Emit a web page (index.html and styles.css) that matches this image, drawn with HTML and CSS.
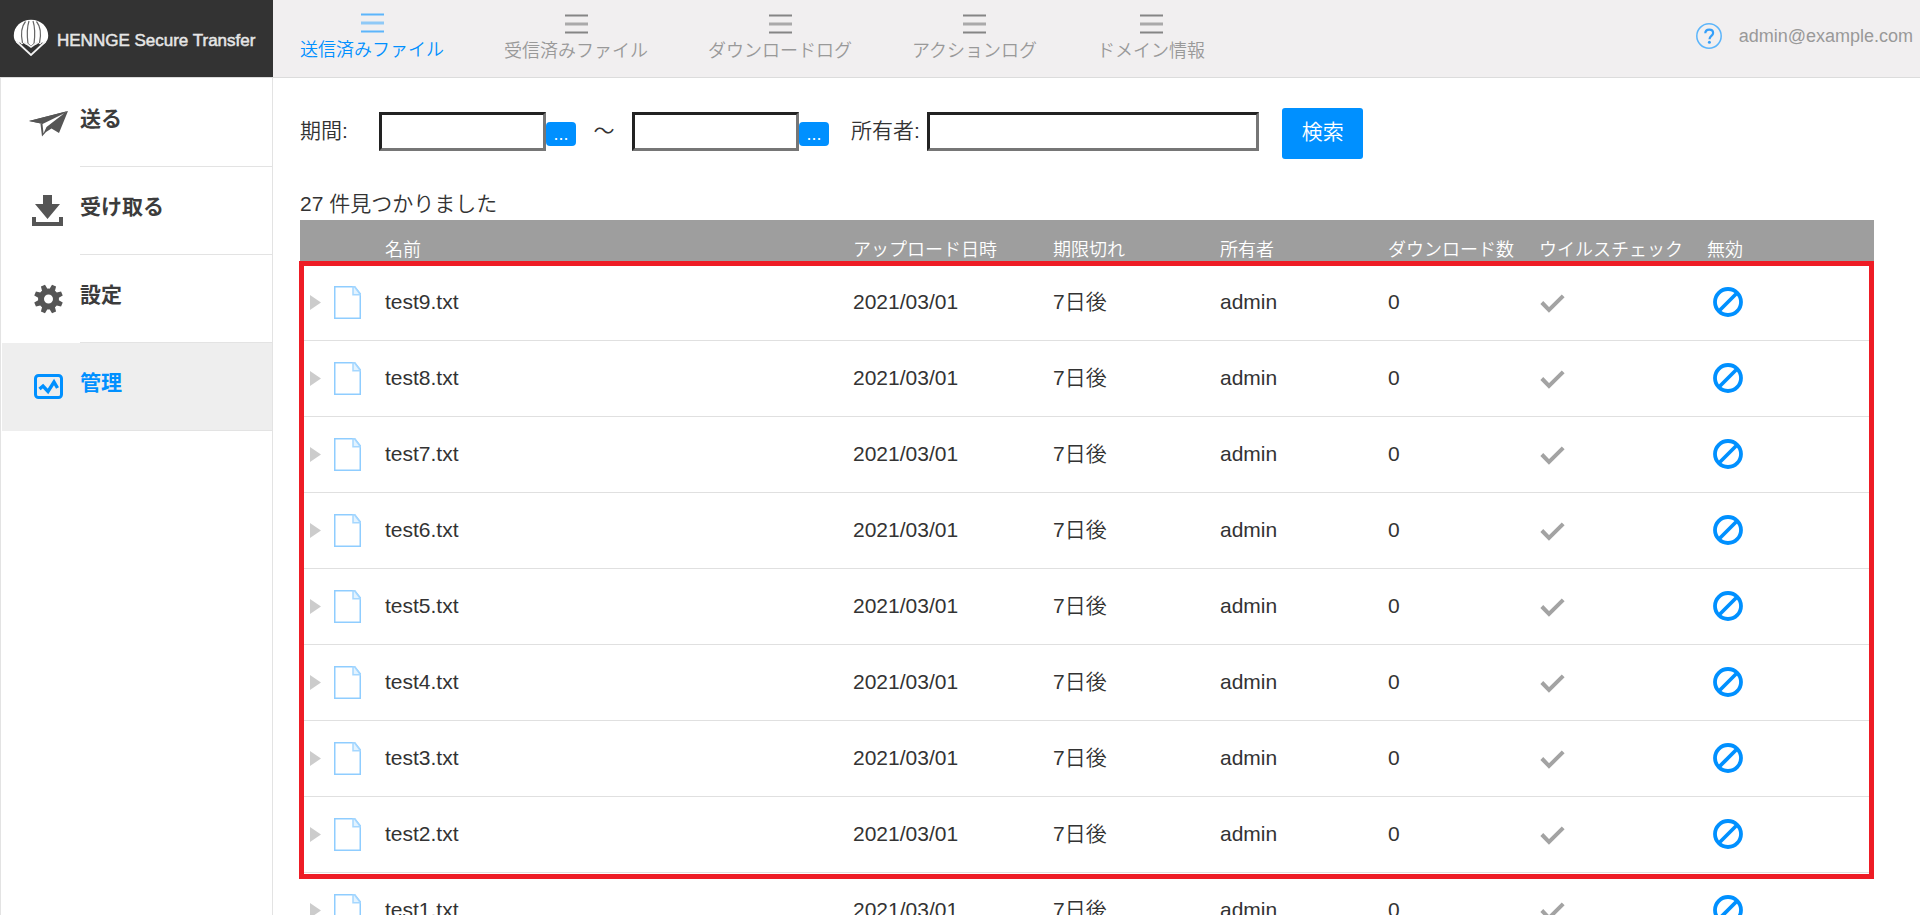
FILE: index.html
```html
<!DOCTYPE html>
<html lang="ja">
<head>
<meta charset="utf-8">
<meta name="viewport" content="width=device-width, initial-scale=1">
<title>HENNGE Secure Transfer</title>
<link rel="stylesheet" href="styles.css">
</head>
<body>
<svg class="sprite" aria-hidden="true">
  <symbol id="bars" viewBox="0 0 23 20"><path d="M0 1.5h23M0 18.5h23" stroke="currentColor" stroke-width="2"/><path d="M0 10h23" stroke="currentColor" stroke-width="3" opacity=".65"/></symbol>
  <symbol id="arrow" viewBox="0 0 11 15"><path d="M0 0l11 7.500-11 7.500z" fill="#ccc"/></symbol>
  <symbol id="doc" viewBox="0 0 27 33"><path d="M.75.75h20l5.500 7v24.500H.75z" fill="#fff" stroke="#8fcdff" stroke-width="1.500"/><path d="M19 1v7.750h7.500L20.500.75z" fill="#e3f3ff" stroke="#a5d7ff" stroke-width="1.500"/></symbol>
  <symbol id="check" viewBox="0 0 25 19"><path d="M1.800 8.500l7.200 7.500L23.200 1.800" fill="none" stroke="#a3a3a3" stroke-width="4"/></symbol>
  <symbol id="ban" viewBox="0 0 30 30"><g fill="none" stroke="#0090ff" stroke-width="3.800"><circle cx="15" cy="15" r="13"/><path d="M6 24L24 6"/></g></symbol>
</svg>
<header class="topbar">
  <a class="brand" href="#">
    <svg class="brand-mark" viewBox="0 0 36 37" aria-hidden="true">
      <path d="M18 .8C8 .8.8 7.800.8 16.500c0 3 .8 4.700 2 6.300l2.500 2.400 1.500-2 2 2.200 2-1.500 2.500 2 2-1.500 2.700 2 2.700-2 2 1.500 2.500-2 2 1.500 2-2.200 1.500 2 2.500-2.400c1.200-1.600 2-3.300 2-6.300C35.200 7.800 28 .8 18 .8z" fill="#fff"/>
      <path d="M12.500 2.500C8 8 8 17 9.500 24M23.500 2.500C28 8 28 17 26.500 24M16 2c-2 6-2 15-1 23M20 2c2 6 2 15 1 23" fill="none" stroke="#666" stroke-width="1.200"/>
      <path d="M5 25.500L18 33l13-7.500-13 11.500z" fill="#333"/>
      <path d="M3.500 22.500L18 36l14.500-13.500M11 23l7 5 7-5" fill="none" stroke="#f2f2f2" stroke-width="1.800"/>
    </svg>
    <span>HENNGE Secure Transfer</span>
  </a>
  <nav class="tabs" aria-label="管理メニュー">
    <a class="tab tab-active" href="#" aria-current="page"><svg class="tab-icon"><use href="#bars"/></svg>送信済みファイル</a>
    <a class="tab" href="#"><svg class="tab-icon"><use href="#bars"/></svg>受信済みファイル</a>
    <a class="tab" href="#"><svg class="tab-icon"><use href="#bars"/></svg>ダウンロードログ</a>
    <a class="tab" href="#"><svg class="tab-icon"><use href="#bars"/></svg>アクションログ</a>
    <a class="tab" href="#"><svg class="tab-icon"><use href="#bars"/></svg>ドメイン情報</a>
  </nav>
  <div class="account">
    <a class="help" href="#" aria-label="ヘルプ"><svg viewBox="0 0 26 26"><circle cx="13" cy="13" r="12.200" fill="none" stroke="#5cb5fb" stroke-width="1.500"/><path d="M9.300 10.300c0-2.300 1.500-3.700 3.900-3.700s3.900 1.400 3.900 3.300c0 2.900-3.600 3-3.600 6.300" fill="none" stroke="#349ffa" stroke-width="2.200"/><circle cx="13.400" cy="19.300" r="1.500" fill="#349ffa"/></svg></a>
    <span>admin@example.com</span>
  </div>
</header>
<div class="layout">
  <nav class="sidebar" aria-label="メインメニュー">
    <a class="side-item" href="#">
      <svg class="side-icon" viewBox="0 0 40 32" aria-hidden="true"><path d="M1 14L40 4 15 17z" fill="#555"/><path d="M1 14L40 4 13 16.500z" fill="#555"/><path d="M40 4L31 26l-7.500-4.500-5.500 3.500L14 29.500 12.500 17z" fill="#555"/><path d="M14.500 17L36 6.500 18.500 20l-3 6.500z" fill="#fff"/></svg>
      <span class="side-label">送る</span>
    </a>
    <a class="side-item" href="#">
      <svg class="side-icon" viewBox="0 0 40 32" aria-hidden="true"><path d="M15 0h9v9h8L19.500 24 7 9h8zM4 22h4v5h23v-5h4v9H4z" fill="#555"/></svg>
      <span class="side-label">受け取る</span>
    </a>
    <a class="side-item" href="#">
      <svg class="side-icon" viewBox="0 0 40 32" aria-hidden="true"><g fill="#555" transform="translate(20.500 16)"><path d="M-3-9l.8-5.500h4.400L3-9zM-3 9l.8 5.500h4.400L3 9z" transform="rotate(22.500)"/><path d="M-3-9l.8-5.500h4.400L3-9zM-3 9l.8 5.500h4.400L3 9z" transform="rotate(67.500)"/><path d="M-3-9l.8-5.500h4.400L3-9zM-3 9l.8 5.500h4.400L3 9z" transform="rotate(112.500)"/><path d="M-3-9l.8-5.500h4.400L3-9zM-3 9l.8 5.500h4.400L3 9z" transform="rotate(157.500)"/><circle r="7.500" fill="none" stroke="#555" stroke-width="6"/></g></svg>
      <span class="side-label">設定</span>
    </a>
    <a class="side-item side-active" href="#" aria-current="page">
      <svg class="side-icon" viewBox="0 0 40 32" aria-hidden="true"><rect x="7.500" y="4.500" width="26" height="22" rx="3" fill="none" stroke="#0090ff" stroke-width="3"/><path d="M11.500 18l3.500-3 5 5.500 6-9.500 3.500 6" fill="none" stroke="#0090ff" stroke-width="3.400"/></svg>
      <span class="side-label">管理</span>
    </a>
  </nav>
  <main class="content">
    <form class="search">
      <label class="period" for="from">期間:</label>
      <input class="field date" id="from" type="text"><button class="pick" type="button" aria-label="開始日を選択">...</button>
      <label class="tilde" for="to">～</label>
      <input class="field date" id="to" type="text"><button class="pick" type="button" aria-label="終了日を選択">...</button>
      <label class="owner-label" for="owner">所有者:</label>
      <input class="field owner" id="owner" type="text">
      <button class="submit" type="submit">検索</button>
    </form>
    <p class="count">27 件見つかりました</p>
    <div class="results">
      <table class="files">
        <colgroup><col class="c-icon"><col><col class="c-upload"><col class="c-expiry"><col class="c-owner"><col class="c-count"><col class="c-virus"><col class="c-off"></colgroup>
        <thead>
          <tr><th></th><th>名前</th><th>アップロード日時</th><th>期限切れ</th><th>所有者</th><th>ダウンロード数</th><th>ウイルスチェック</th><th>無効</th></tr>
        </thead>
        <tbody>
          <tr><td><div class="lead"><button class="expand" aria-label="詳細"><svg><use href="#arrow"/></svg></button><svg class="doc"><use href="#doc"/></svg></div></td><td>test9.txt</td><td>2021/03/01</td><td>7日後</td><td>admin</td><td>0</td><td><svg class="check"><use href="#check"/></svg></td><td><button class="ban" aria-label="無効にする"><svg><use href="#ban"/></svg></button></td></tr>
          <tr><td><div class="lead"><button class="expand" aria-label="詳細"><svg><use href="#arrow"/></svg></button><svg class="doc"><use href="#doc"/></svg></div></td><td>test8.txt</td><td>2021/03/01</td><td>7日後</td><td>admin</td><td>0</td><td><svg class="check"><use href="#check"/></svg></td><td><button class="ban" aria-label="無効にする"><svg><use href="#ban"/></svg></button></td></tr>
          <tr><td><div class="lead"><button class="expand" aria-label="詳細"><svg><use href="#arrow"/></svg></button><svg class="doc"><use href="#doc"/></svg></div></td><td>test7.txt</td><td>2021/03/01</td><td>7日後</td><td>admin</td><td>0</td><td><svg class="check"><use href="#check"/></svg></td><td><button class="ban" aria-label="無効にする"><svg><use href="#ban"/></svg></button></td></tr>
          <tr><td><div class="lead"><button class="expand" aria-label="詳細"><svg><use href="#arrow"/></svg></button><svg class="doc"><use href="#doc"/></svg></div></td><td>test6.txt</td><td>2021/03/01</td><td>7日後</td><td>admin</td><td>0</td><td><svg class="check"><use href="#check"/></svg></td><td><button class="ban" aria-label="無効にする"><svg><use href="#ban"/></svg></button></td></tr>
          <tr><td><div class="lead"><button class="expand" aria-label="詳細"><svg><use href="#arrow"/></svg></button><svg class="doc"><use href="#doc"/></svg></div></td><td>test5.txt</td><td>2021/03/01</td><td>7日後</td><td>admin</td><td>0</td><td><svg class="check"><use href="#check"/></svg></td><td><button class="ban" aria-label="無効にする"><svg><use href="#ban"/></svg></button></td></tr>
          <tr><td><div class="lead"><button class="expand" aria-label="詳細"><svg><use href="#arrow"/></svg></button><svg class="doc"><use href="#doc"/></svg></div></td><td>test4.txt</td><td>2021/03/01</td><td>7日後</td><td>admin</td><td>0</td><td><svg class="check"><use href="#check"/></svg></td><td><button class="ban" aria-label="無効にする"><svg><use href="#ban"/></svg></button></td></tr>
          <tr><td><div class="lead"><button class="expand" aria-label="詳細"><svg><use href="#arrow"/></svg></button><svg class="doc"><use href="#doc"/></svg></div></td><td>test3.txt</td><td>2021/03/01</td><td>7日後</td><td>admin</td><td>0</td><td><svg class="check"><use href="#check"/></svg></td><td><button class="ban" aria-label="無効にする"><svg><use href="#ban"/></svg></button></td></tr>
          <tr><td><div class="lead"><button class="expand" aria-label="詳細"><svg><use href="#arrow"/></svg></button><svg class="doc"><use href="#doc"/></svg></div></td><td>test2.txt</td><td>2021/03/01</td><td>7日後</td><td>admin</td><td>0</td><td><svg class="check"><use href="#check"/></svg></td><td><button class="ban" aria-label="無効にする"><svg><use href="#ban"/></svg></button></td></tr>
          <tr><td><div class="lead"><button class="expand" aria-label="詳細"><svg><use href="#arrow"/></svg></button><svg class="doc"><use href="#doc"/></svg></div></td><td>test1.txt</td><td>2021/03/01</td><td>7日後</td><td>admin</td><td>0</td><td><svg class="check"><use href="#check"/></svg></td><td><button class="ban" aria-label="無効にする"><svg><use href="#ban"/></svg></button></td></tr>
        </tbody>
      </table>
      <div class="highlight"></div>
    </div>
  </main>
</div>
</body>
</html>
```
FILE: styles.css
```css
* { box-sizing: border-box; }

body {
  margin: 0;
  height: 100vh;
  display: flex;
  flex-direction: column;
  overflow: hidden;
  background: #fff;
  color: #333;
  font: 350 21px/30px "Liberation Sans", "Noto Sans CJK JP", sans-serif;
}

a { color: inherit; text-decoration: none; }
button, input { font: inherit; }
svg { display: block; }
.sprite { position: absolute; width: 0; height: 0; }

.topbar {
  flex: none;
  display: flex;
  height: 78px;
  background: #f1eff0;
  border-bottom: 1px solid #dcdcdc;
  color: #999;
  font-size: 18px;
}

.brand {
  display: flex;
  align-items: center;
  gap: 8px;
  width: 273px;
  padding: 0 0 2px 13px;
  background: #333;
  color: #e6e6e6;
  font-size: 17px;
  white-space: nowrap;
  -webkit-text-stroke: 0.5px #e6e6e6;
}
.brand span { padding-top: 7px; }
.brand-mark { width: 36px; height: 37px; flex: none; }

.tabs { display: flex; gap: 60px; padding: 14px 0 0 27px; }
.tab {
  display: flex;
  flex-direction: column;
  align-items: center;
  line-height: 34px;
  white-space: nowrap;
}
.tab-icon { width: 23px; height: 20px; color: #858585; }
.tab-active { color: #0090ff; margin-top: -1px; }
.tab-active .tab-icon { color: #5cb5fb; }

.account {
  display: flex;
  align-items: center;
  gap: 17px;
  margin-left: auto;
  padding: 0 7px 6px 0;
}
.help svg { width: 26px; height: 26px; }

.layout { flex: 1; display: flex; min-height: 0; }

.sidebar {
  flex: none;
  width: 273px;
  padding: 1px 0 0 1px;
  border: solid #e3e3e3;
  border-width: 0 1px;
}
.side-item { display: flex; align-items: center; color: #3c3c3c; font-weight: 700; }
.side-icon { width: 40px; height: 32px; margin: 0 12px 0 26px; }
.side-label {
  flex: 1;
  padding: 25px 0 32px;
  border-bottom: 1px solid #e3e3e3;
}
.side-active { background: #eee; color: #0090ff; }

.content { flex: 1; min-width: 0; padding: 30px 46px 0 27px; }

.search { display: flex; align-items: center; height: 51px; }
.search label { padding-bottom: 5px; white-space: nowrap; }
.period { width: 79px; }
.field {
  height: 39px;
  margin-bottom: 4px;
  padding: 0 6px;
  background: #fff;
  border: 3px solid;
  border-color: #222 #767676 #767676 #222;
  border-radius: 0;
}
.date { width: 167px; }
.pick {
  width: 30px;
  height: 24px;
  padding: 0;
  border: 0;
  border-radius: 4px;
  background: #0090ff;
  color: #fff;
  font-size: 18px;
  line-height: 24px;
}
.tilde { width: 56px; text-align: center; }
.search .owner-label { padding-right: 7px; padding-left: 22px; }
.owner { width: 332px; }
.submit {
  margin-left: 23px;
  padding: 9px 19px 12px 20px;
  border: 0;
  border-radius: 3px;
  background: #0090ff;
  color: #fff;
  white-space: nowrap;
}

.count { margin: 30px 0 1px; }

.results { position: relative; }
.files { width: 100%; table-layout: fixed; border-collapse: separate; border-spacing: 0; }
.files th, .files td { padding: 0; text-align: left; white-space: nowrap; }
.files th {
  height: 45px;
  padding-top: 14px;
  background: #9e9e9e;
  color: #fff;
  font-size: 18px;
  font-weight: 350;
}
.files td { height: 76px; padding-bottom: 2px; border-bottom: 1px solid #e0e0e0; }
.c-icon { width: 85px; }
.c-upload { width: 200px; }
.c-expiry { width: 167px; }
.c-owner { width: 168px; }
.c-count { width: 151px; }
.c-virus { width: 168px; }
.c-off { width: 167px; }

.lead { display: flex; align-items: center; gap: 13px; padding: 1px 0 0 10px; }
.expand, .ban { padding: 0; border: 0; background: none; }
.expand svg { width: 11px; height: 15px; }
.doc { width: 27px; height: 33px; }
.check { width: 25px; height: 19px; margin: 3px 0 0 1px; }
.ban { margin-left: 6px; vertical-align: middle; }
.ban svg { width: 30px; height: 30px; }

/* frame round the first eight rows */
.highlight {
  position: absolute;
  top: 41px;
  left: -1px;
  right: 0;
  height: 618px;
  border: 5px solid #ee1c25;
  pointer-events: none;
}
```
